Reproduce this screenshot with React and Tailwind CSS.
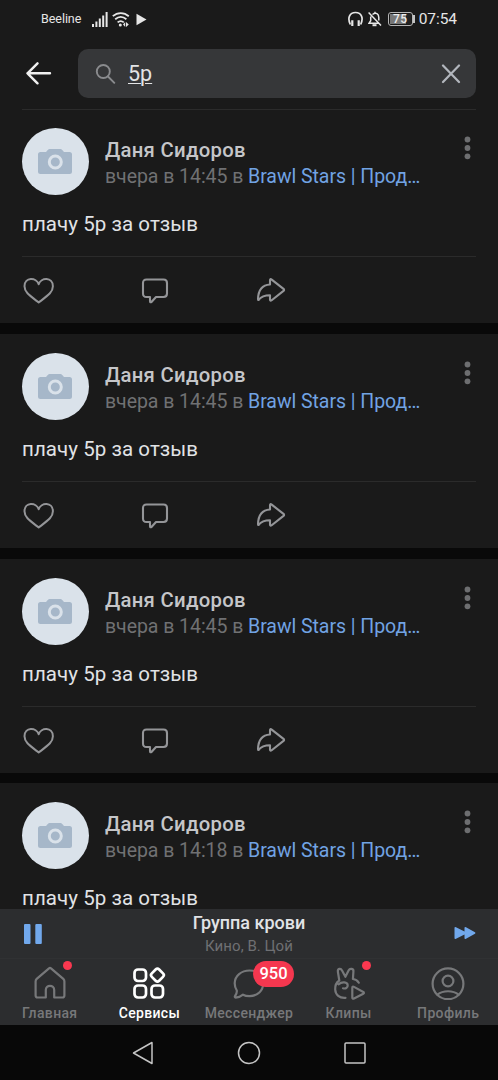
import React from "react";

const T = "whitespace-nowrap";

function StatusBar() {
  return (
    <div className="flex h-[38px] shrink-0 items-center pl-[41px] pr-[41px] text-[#e6e6e6]">
      <span className={T + " text-[12.500px] leading-none tracking-[-0.050px]"}>Beeline</span>
      <svg className="ml-[11px]" width="16" height="15" viewBox="0 0 16 15" fill="currentColor">
        <rect x="0" y="12" width="2" height="3" />
        <rect x="3.4" y="9.5" width="2" height="5.5" />
        <rect x="6.8" y="6.5" width="2" height="8.5" />
        <rect x="10.2" y="3.5" width="2" height="11.5" />
        <rect x="13.6" y="0" width="2" height="15" />
      </svg>
      <svg className="ml-[4px]" width="18" height="15" viewBox="0 0 18 15" fill="none" stroke="currentColor" strokeWidth="1.8">
        <path d="M.8 4.2C5.5 0 12 0 16.8 4.2M3.2 7.3c3.500-3 7.600-3 11.200 0M5.600 10.400c1.900-1.600 4.300-1.600 6.200 0" />
        <circle cx="8.3" cy="13" r="1.500" fill="currentColor" stroke="none" />
        <path d="m13.200 10-2.200 2.500 2.200 2.500zM14 10l2.800 2.500L14 15z" fill="currentColor" stroke="none" />
      </svg>
      <svg className="ml-[6px]" width="11" height="13" viewBox="0 0 11 13" fill="currentColor">
        <path d="M.5.7 10.500 6.500.5 12.300z" />
      </svg>
      <div className="flex-1" />
      <svg width="15" height="16" viewBox="0 0 15 16" fill="none" stroke="currentColor" strokeWidth="1.700">
        <path d="M2.300 13.500C-.8 7 1.500 1.500 7.500 1.500s8.300 5.500 5.200 12" />
        <path d="M4.300 9.200v5.800M10.700 9.200v5.800" strokeWidth="2.200" />
      </svg>
      <svg className="ml-[5px]" width="14" height="16" viewBox="0 0 14 16" fill="none" stroke="currentColor" strokeWidth="1.500">
        <path d="M4.500 3.500C8 .8 10.800 3 10.800 6.500v3M2.700 5.500v4.200L1 12.300h9.500M7 .7v1.500M.6 1.500l12.400 13" />
        <path d="M4.500 14.200h4" strokeWidth="2" />
      </svg>
      <div className="ml-[6px] flex h-[14px] w-[25px] items-center justify-center rounded-[3px] border border-[#b5b5b5] p-[1px]">
        <div className="flex h-full w-full items-center justify-center bg-[linear-gradient(90deg,#777_75%,#222_75%)] text-[12px] font-medium leading-none tracking-[0.3px] text-[#eee]">75</div>
      </div>
      <div className="h-[8px] w-[2px] bg-[#c4c4c4]" />
      <span className={T + " ml-[4px] mt-[2px] text-[15.500px] leading-none tracking-[-0.050px]"}>07:54</span>
    </div>
  );
}

function SearchBar() {
  return (
    <div className="flex h-[71px] shrink-0 items-start pt-[11px]">
      <svg className="ml-[26px] mt-[12px]" width="26" height="24" viewBox="0 0 26 24" fill="none" stroke="#f0f0f0" strokeWidth="2.400" strokeLinecap="round" strokeLinejoin="round">
        <path d="M24 12.300H1.500M11.500 2.300 1.500 12.300l10 10" />
      </svg>
      <div className="ml-[26px] flex h-[49px] w-[398px] items-center rounded-[10px] bg-[#363739] pl-[17px] pr-[15px]">
        <svg width="21" height="20" viewBox="0 0 21 20" fill="none" stroke="#8a8b8e" strokeWidth="1.900" strokeLinecap="round">
          <circle cx="8.300" cy="7.500" r="6.500" />
          <path d="m13 12.500 6.300 6.300" />
        </svg>
        <span className="ml-[12px] mt-[1px] text-[21.500px] leading-none text-[#e3e4e6] underline decoration-1 underline-offset-[2px]">5р</span>
        <div className="flex-1" />
        <svg width="20" height="20" viewBox="0 0 20 20" fill="none" stroke="#b2b6bd" strokeWidth="2.200" strokeLinecap="round">
          <path d="m2 1.500 16 16.500M18 1.500 2 18" />
        </svg>
      </div>
    </div>
  );
}

function Post({ time, last }) {
  return (
    <article className="shrink-0">
      <div className="flex h-[93px] pl-[22px] pt-[19px]">
        <div className="flex h-[67px] w-[67px] shrink-0 items-center justify-center rounded-full bg-[#dae2ea]">
          <svg className="-ml-px" width="34" height="26" viewBox="0 0 34 26">
            <path fill="#a6b7c9" d="M2.500 3H8l2-2.300Q10.600 0 11.500 0h11q.9 0 1.500.7L26 3h5.500Q34 3 34 5.500v17q0 2.500-2.500 2.500h-29Q0 25 0 22.500v-17Q0 3 2.500 3z" />
            <circle cx="17.300" cy="13" r="6" fill="none" stroke="#dae2ea" strokeWidth="3" />
          </svg>
        </div>
        <div className="ml-[16px] flex flex-1 flex-col pt-[9px]">
          <span className={T + " text-[20.300px] font-medium leading-[26px] tracking-[0.300px] text-[#c5c6c9]"}>Даня Сидоров</span>
          <span className={T + " text-[19.500px] leading-[28px] tracking-[-0.050px] text-[#707173]"}>
            вчера в {time} в <span className="tracking-[-0.050px] text-[#71a3e3]">Brawl Stars | Прод…</span>
          </span>
        </div>
        <svg className="mr-[27px] mt-[8px] shrink-0" width="7" height="24" viewBox="0 0 7 24" fill="#6d6e70">
          <circle cx="3.500" cy="3.500" r="2.900" />
          <circle cx="3.500" cy="12" r="2.900" />
          <circle cx="3.500" cy="20.300" r="2.900" />
        </svg>
      </div>
      <p className={T + " pl-[22px] text-[20.500px] tracking-[0.070px] text-[#e1e3e6] " + (last ? "pt-[8px] leading-[28px]" : "h-[54px] pt-[8px] leading-[28px]")}>плачу 5р за отзыв</p>
      {!last && (
        <>
          <div className="mx-[22px] h-px bg-[#2b2b2b]" />
          <div className="flex h-[66px] items-start pt-[20px]">
            <svg className="ml-[23px]" width="32" height="28" viewBox="0 0 32 28" fill="none" stroke="#949598" strokeWidth="2" strokeLinejoin="round">
              <path d="M15.700 7.300C13.500.2 1.500-.3 1.500 9.200c0 6 5 9.200 14.200 16.300 9.200-7.100 14.200-10.300 14.200-16.300C29.900-.3 17.900.2 15.700 7.300z" />
            </svg>
            <svg className="ml-[86px] mt-[1px]" width="28" height="26" viewBox="0 0 28 26" fill="none" stroke="#949598" strokeWidth="2.100" strokeLinejoin="round">
              <path d="M5.500 1.500h17q3.500 0 3.500 3.500v10.500q0 3.500-3.500 3.500H15l-4.300 4.800q-1.700 1.300-1.700-.8v-4H5.500Q2 19 2 15.500V5q0-3.500 3.500-3.500z" />
            </svg>
            <svg className="ml-[87px]" width="30" height="26" viewBox="0 0 30 26" fill="none" stroke="#949598" strokeWidth="2.100" strokeLinejoin="round">
              <path d="M14 7.500V3.400q0-2 1.700-.8l11.800 9.300q1.200 1 0 2L15.700 23.200q-1.700 1.200-1.700-.8v-4.200c-5 0-8.500.8-11 4.300q-1 1.200-1-.5C2.300 13.500 6 8 14 7.500z" />
            </svg>
          </div>
        </>
      )}
    </article>
  );
}

function Player() {
  return (
    <div className="flex h-[50px] shrink-0 border-b border-[#303133] bg-[#2c2d2f] pl-[24px] pr-[22px]">
      <svg className="mt-[15px]" width="18" height="20" viewBox="0 0 18 20" fill="#71a8ec">
        <rect width="6.500" height="20" rx="1" />
        <rect x="11.300" width="6.500" height="20" rx="1" />
      </svg>
      <div className="flex flex-1 flex-col items-center pl-[2px] pt-[2px]">
        <span className={T + " text-[18px] font-medium leading-[24px] text-[#e1e3e6]"}>Группа крови</span>
        <span className={T + " text-[15px] leading-[23px] tracking-[0.050px] text-[#6f7073]"}>Кино, В. Цой</span>
      </div>
      <svg className="mt-[17px]" width="22" height="14" viewBox="0 0 22 14" fill="#71a8ec">
        <path d="M.5 2Q.5.400 2 1.200l8.500 4.300V2q0-1.600 1.500-.8l9 5q1 .8 0 1.600l-9 5q-1.500.8-1.500-.7V8.500L2 12.800q-1.500.8-1.500-.7z" />
      </svg>
    </div>
  );
}

const svgProps = { width: 34, height: 34, viewBox: "0 0 34 34", fill: "none", stroke: "currentColor", strokeWidth: 2.2, strokeLinejoin: "round", strokeLinecap: "round" };

function HomeIcon() {
  return (
    <svg {...svgProps}>
      <path d="M2.600 15.500q0-1.600 1.100-2.600L16 2.400q1-.8 2 0l12.300 10.500q1.100 1 1.100 2.600v14q0 2-2 2h-8.200v-7.500c0-5.600-8.400-5.600-8.400 0v7.500H4.600q-2 0-2-2z" />
    </svg>
  );
}

function ServicesIcon() {
  return (
    <svg {...svgProps} strokeWidth={2.700}>
      <rect x="2.500" y="3.500" width="11.500" height="11.500" rx="3.500" />
      <rect x="2.500" y="19.500" width="11.500" height="12" rx="3.500" />
      <rect x="19.500" y="19.500" width="11.500" height="12" rx="3.500" />
      <rect x="20.200" y="3.900" width="10.400" height="10.400" rx="2.500" transform="rotate(45 25.400 9.100)" />
    </svg>
  );
}

function MessengerIcon() {
  return (
    <svg {...svgProps}>
      <path d="M17.500 4.500c8 0 13.700 5.300 13.700 12.800s-5.700 12.900-13.700 12.900c-2.300 0-4.600-.4-6.500-1.500-2.300 1.900-4.700 2.900-7.300 2.900-1 0-1.100-.9-.6-1.600 1.400-2 1.900-3.700 1.700-5.500C3.300 22.300 2.700 19.700 2.700 17.300c0-7.500 6.800-12.800 14.800-12.800z" />
    </svg>
  );
}

function ClipsIcon() {
  return (
    <svg {...svgProps}>
      <path d="M7.300 14.500 5.900 5.800C5.400 2.400 8.800 2 9.900 4.300l3.500 6.500 3.300-6.500c1.200-2.400 5.200-1.800 4.700 1.300L20.900 13c2.600.3 4.600 1.500 5.900 3.700M7.300 14.500C4.200 16.500 3 19.500 3.200 23.500c.3 5.500 4.300 8.800 10.300 8.300M6.500 18.300c3.500-3 9-2.300 9.200 1 .2 2.500-2.200 3.700-4.700 3" />
      <path d="M20.300 22q0-2 1.700-1.100l9.300 5.100q1.200.9 0 1.700L22 32.400q-1.700.8-1.700-1z" />
    </svg>
  );
}

function ProfileIcon() {
  return (
    <svg {...svgProps}>
      <circle cx="17" cy="17.800" r="15.400" />
      <circle cx="17" cy="15" r="5.400" />
      <path d="M6.500 28.600c5.500-4.500 15.500-4.500 21 0" />
    </svg>
  );
}

function Tab({ Icon, label, active, dot, badge }) {
  return (
    <div className={"flex flex-1 flex-col items-center pt-[7px] " + (active ? "text-white" : "text-[#77787a]")}>
      <div className="relative h-[34px] w-[34px]">
        <Icon />
        {dot && <div className="absolute left-[30px] top-[-5px] h-[9px] w-[9px] rounded-full bg-[#fa3850]" />}
        {badge && (
          <div className="absolute left-[21px] top-[-5px] flex h-[26px] w-[41px] items-center justify-center rounded-full bg-[#f5374f] text-[16.500px] font-medium leading-none text-white">
            {badge}
          </div>
        )}
      </div>
      <span className={T + " mt-[4px] text-[14px] font-medium leading-[18px] tracking-[0.350px]"}>{label}</span>
    </div>
  );
}

export default function App() {
  return (
    <div className="flex h-[1080px] w-[498px] flex-col overflow-hidden bg-[#1a1a1a] font-[Roboto,sans-serif]">
      <StatusBar />
      <SearchBar />
      <main className="flex min-h-0 flex-1 flex-col overflow-hidden">
        <div className="mx-[22px] -mb-px h-px shrink-0 bg-[#2b2b2b]" />
        <Post time="14:45" />
        <div className="h-[11px] shrink-0 bg-[#090909]" />
        <Post time="14:45" />
        <div className="h-[11px] shrink-0 bg-[#090909]" />
        <Post time="14:45" />
        <div className="h-[10px] shrink-0 bg-[#090909]" />
        <Post time="14:18" last />
      </main>
      <Player />
      <nav className="flex h-[66px] shrink-0 bg-[#2c2d2f]">
        <Tab Icon={HomeIcon} label="Главная" dot />
        <Tab Icon={ServicesIcon} label="Сервисы" active />
        <Tab Icon={MessengerIcon} label="Мессенджер" badge="950" />
        <Tab Icon={ClipsIcon} label="Клипы" dot />
        <Tab Icon={ProfileIcon} label="Профиль" />
      </nav>
      <div className="flex h-[55px] shrink-0 items-center justify-center gap-[83px] bg-[#080808]">
        <svg width="22" height="24" viewBox="0 0 22 24" fill="none" stroke="#c4c4c4" strokeWidth="1.500" strokeLinejoin="round">
          <path d="M20 1.500v21L1.500 12z" />
        </svg>
        <svg width="24" height="24" viewBox="0 0 24 24" fill="none" stroke="#c4c4c4" strokeWidth="1.500">
          <circle cx="12" cy="12" r="10.500" />
        </svg>
        <svg width="22" height="22" viewBox="0 0 22 22" fill="none" stroke="#c4c4c4" strokeWidth="1.500">
          <rect x="1" y="1" width="20" height="20" rx="1" />
        </svg>
      </div>
    </div>
  );
}
